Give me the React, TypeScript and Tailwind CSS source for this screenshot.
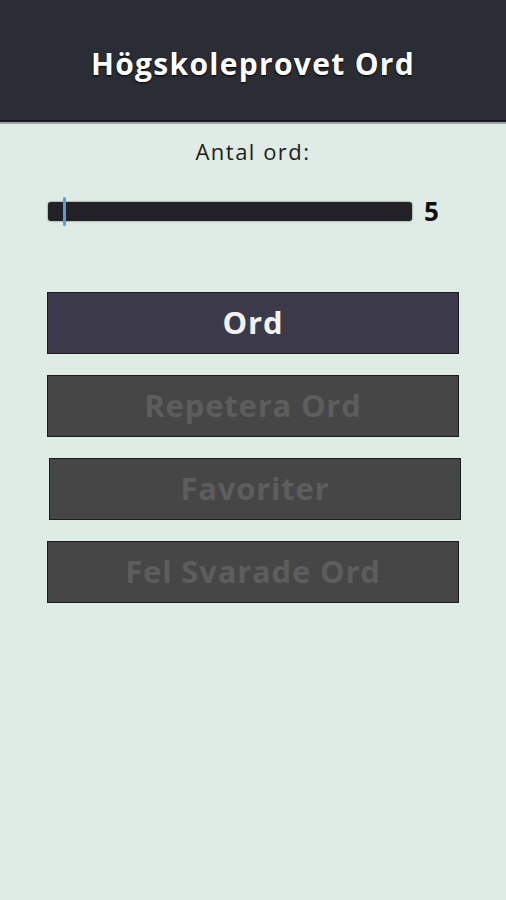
import { ReactElement } from 'react';

const menuItems = [
  { label: 'Ord', active: true, offset: '' },
  { label: 'Repetera Ord', active: false, offset: '' },
  { label: 'Favoriter', active: false, offset: 'translate-x-[2px]' },
  { label: 'Fel Svarade Ord', active: false, offset: '' },
];

const MenuButton = ({
  label,
  active,
  offset,
}: {
  label: string;
  active: boolean;
  offset: string;
}): ReactElement => (
  <button
    className={`flex h-[62px] w-[412px] items-center justify-center border border-[#1c1c1f] text-[31px] font-bold tracking-[0.8px] ${offset} ${
      active
        ? 'bg-[#3c3a48] text-[#f2f2f2]'
        : 'bg-[#464646] text-[#5d5d5d]'
    }`}
  >
    <span className="-mt-[2px]">{label}</span>
  </button>
);

const App = (): ReactElement => {
  return (
    <div className="flex h-[900px] w-[506px] flex-col bg-[#dfece6] font-['Open_Sans',sans-serif]">
      <header className="flex h-[122px] items-center justify-center border-b-2 border-[#17181c] bg-[#2b2d35]">
        <h1 className="mt-[6px] text-[30px] font-bold tracking-[1.3px] text-white [text-shadow:0_1px_2px_#000]">
          Högskoleprovet Ord
        </h1>
      </header>
      <div className="h-[2px] bg-[#9ea4a2]" />

      <div className="flex flex-col items-center pt-[11px]">
        <p className="text-[22px] tracking-[1.5px] text-[#1d1d1d]">Antal ord:</p>

        <div className="mt-[24px] flex w-full items-center pl-[48px]">
          <div className="relative h-[19px] w-[364px] rounded-[3px] bg-[#222226] shadow-[0_0_2px_#555]">
            <div className="absolute -top-[5px] left-[15px] h-[29px] w-[3px] rounded-full bg-[#5b9bd3]" />
          </div>
          <span className="ml-[12px] text-[26px] font-bold text-[#111]">5</span>
        </div>

        <div className="mt-[61px] flex flex-col items-center gap-[21px]">
          {menuItems.map((item) => (
            <MenuButton key={item.label} {...item} />
          ))}
        </div>
      </div>
    </div>
  );
};

export default App;
